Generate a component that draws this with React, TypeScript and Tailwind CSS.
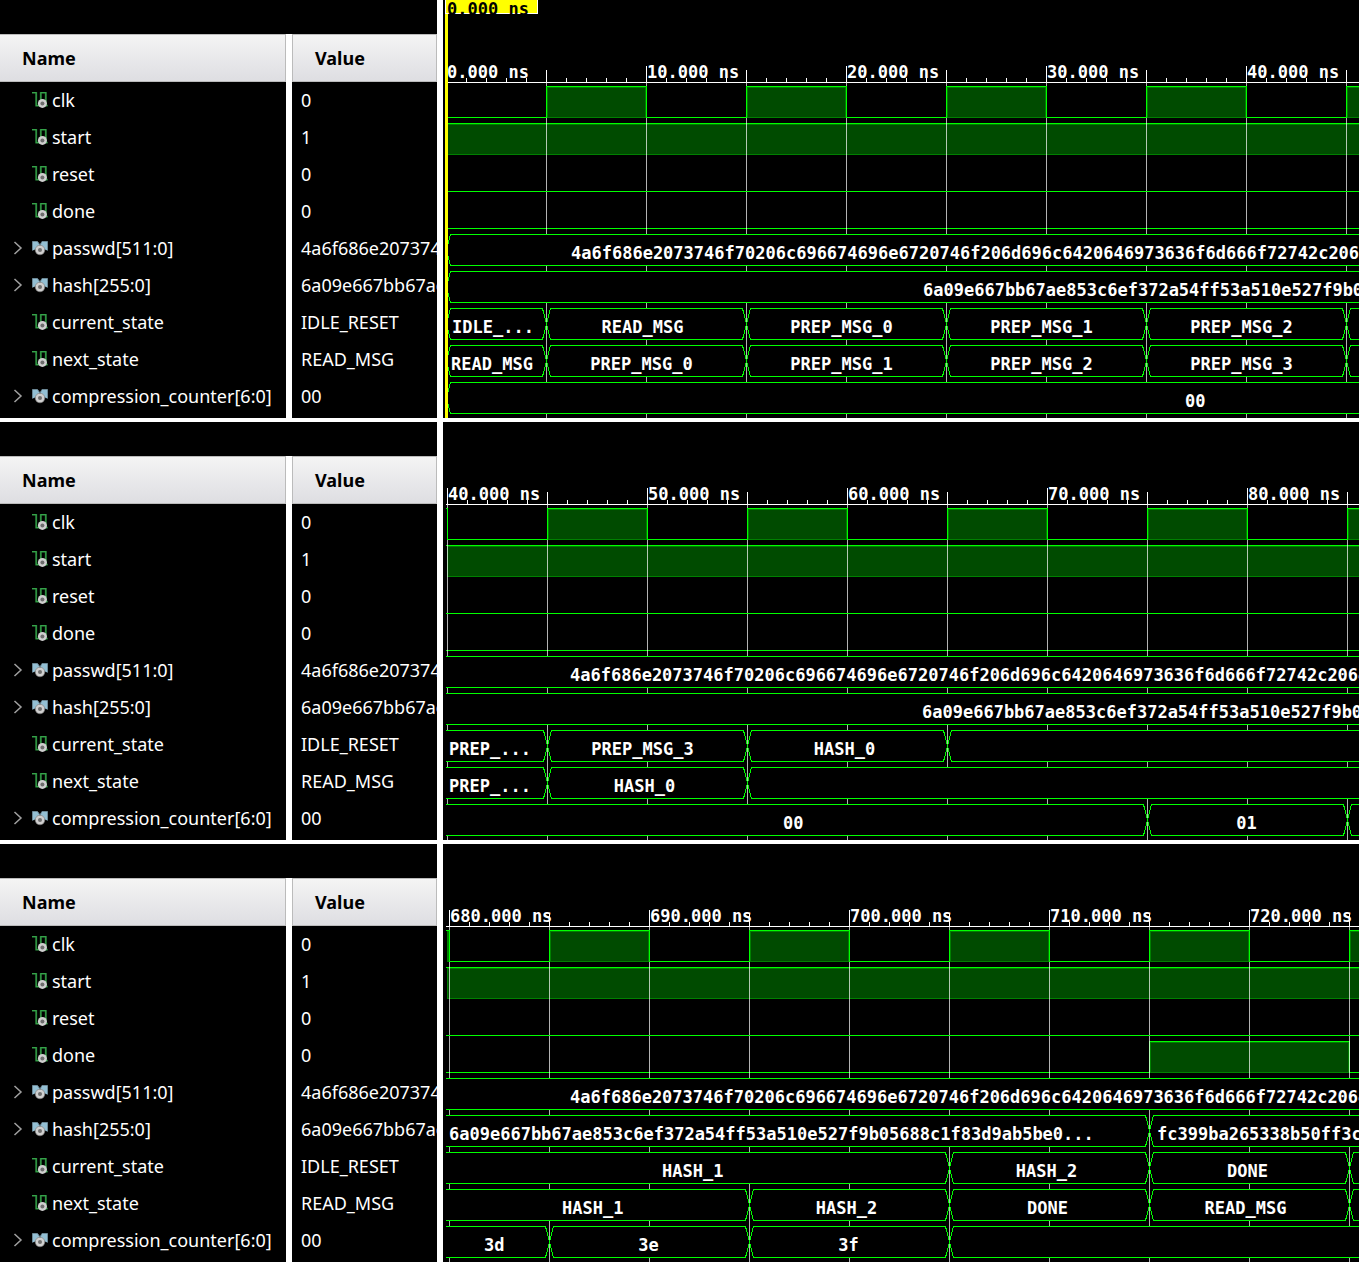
import React from "react";

type Segment = { end?: number; label?: string; at?: number };
type Pulse = [number, number];

type Panel = {
  id: string;
  origin: number;
  firstLabel: number;
  cursor?: boolean;
  clk: Pulse[];
  start: Pulse[];
  done: Pulse[];
  buses: Segment[][];
};

const FAR = 4000;
const PASSWD = "4a6f686e2073746f70206c696674696e6720746f206d696c6420646973636f6d666f72742c20646";
const HASH = "6a09e667bb67ae853c6ef372a54ff53a510e527f9b05688c1f83d9ab5be0";

const clock = (first: number): Pulse[] =>
  Array.from({ length: 18 }, (_, i) => [first + i * 200, first + i * 200 + 100]);

// x values are measured from the left edge of the waveform column; 20 px per nanosecond.
const panels: Panel[] = [
  {
    id: "w0",
    origin: 3,
    firstLabel: 0,
    cursor: true,
    clk: clock(103),
    start: [[3, FAR]],
    done: [],
    buses: [
      [{ end: 3 }, { label: PASSWD, at: 128 }],
      [{ end: 3 }, { label: HASH.slice(0, 46), at: 480 }],
      [
        { end: 3 },
        { end: 103, label: "IDLE_...", at: 9 },
        { end: 303, label: "READ_MSG" },
        { end: 503, label: "PREP_MSG_0" },
        { end: 703, label: "PREP_MSG_1" },
        { end: 903, label: "PREP_MSG_2" },
        {},
      ],
      [
        { end: 3 },
        { end: 103, label: "READ_MSG", at: 8 },
        { end: 303, label: "PREP_MSG_0" },
        { end: 503, label: "PREP_MSG_1" },
        { end: 703, label: "PREP_MSG_2" },
        { end: 903, label: "PREP_MSG_3" },
        {},
      ],
      [{ end: 3 }, { label: "00", at: 742 }],
    ],
  },
  {
    id: "w1",
    origin: 4,
    firstLabel: 40,
    clk: [[3, 4], ...clock(104)],
    start: [[3, FAR]],
    done: [],
    buses: [
      [{ label: PASSWD, at: 127 }],
      [{ label: HASH.slice(0, 46), at: 479 }],
      [
        { end: 104, label: "PREP_...", at: 6 },
        { end: 304, label: "PREP_MSG_3" },
        { end: 504, label: "HASH_0" },
        {},
      ],
      [{ end: 104, label: "PREP_...", at: 6 }, { end: 304, label: "HASH_0" }, {}],
      [{ end: 704, label: "00", at: 340 }, { end: 904, label: "01" }, {}],
    ],
  },
  {
    id: "w2",
    origin: 6,
    firstLabel: 680,
    clk: [[3, 6], ...clock(106)],
    start: [[3, FAR]],
    done: [[706, 906]],
    buses: [
      [{ label: PASSWD, at: 127 }],
      [
        { end: 706, label: HASH + "...", at: 6 },
        { label: "fc399ba265338b50ff3ca", at: 714 },
      ],
      [
        { end: 506, label: "HASH_1", at: 219 },
        { end: 706, label: "HASH_2" },
        { end: 906, label: "DONE" },
        {},
      ],
      [
        { end: 306, label: "HASH_1", at: 119 },
        { end: 506, label: "HASH_2" },
        { end: 706, label: "DONE" },
        { end: 906, label: "READ_MSG" },
        {},
      ],
      [
        { end: 106, label: "3d", at: 41 },
        { end: 306, label: "3e" },
        { end: 506, label: "3f" },
        {},
      ],
    ],
  },
];

const signals = [
  { name: "clk", value: "0" },
  { name: "start", value: "1" },
  { name: "reset", value: "0" },
  { name: "done", value: "0" },
  { name: "passwd[511:0]", value: "4a6f686e207374", bus: true },
  { name: "hash[255:0]", value: "6a09e667bb67ae", bus: true },
  { name: "current_state", value: "IDLE_RESET" },
  { name: "next_state", value: "READ_MSG" },
  { name: "compression_counter[6:0]", value: "00", bus: true },
];

const LEFT = 3;
const rowTop = (i: number) => 82 + 37 * i;

function SignalIcon() {
  return (
    <svg width="16" height="16" viewBox="0 0 16 16" className="shrink-0" aria-hidden="true">
      <path d="M0 .6H4.2V13.6H8.8V.6H13.8V13.6H15.5" fill="none" stroke="#1d5c28" strokeWidth="2" />
      <path d="M0 .6H4.2V13.6H8.8V.6H13.8V13.6H15.5" fill="none" stroke="#35a349" strokeWidth="1.1" />
      <circle cx="10.4" cy="11.4" r="4.5" fill="#cfcfcf" />
      <circle cx="10.4" cy="11.4" r="2" fill="#6e6e6e" />
    </svg>
  );
}

function BusIcon() {
  return (
    <svg width="16" height="16" viewBox="0 0 16 16" className="shrink-0" aria-hidden="true">
      <path d="M.5 1.5H5.5L8 5L10 1.5H15.5V10.5H.5Z" fill="#93bfd3" stroke="#6c8896" />
      <path d="M0 11L4 9L8 5L12 9L16 11V16H0Z" fill="#000" />
      <circle cx="8" cy="10" r="4.8" fill="#cfcfcf" stroke="#777" strokeWidth=".6" />
      <circle cx="8" cy="10" r="2" fill="#6e6e6e" />
    </svg>
  );
}

function Logic({ row, pulses }: { row: number; pulses: Pulse[] }) {
  const hi = rowTop(row) + 4;
  const lo = hi + 31;
  let d = "";
  let x = LEFT;
  for (const [a, b] of pulses) {
    if (a > LEFT) d += `M${x} ${lo + 0.5}H${a + 0.5}V${hi + 0.5}`;
    else d += `M${LEFT} ${hi + 0.5}`;
    d += `H${b + 0.5}V${lo + 1}`;
    x = b;
  }
  if (x < FAR) d += `M${x} ${lo + 0.5}H${FAR}`;
  return (
    <g>
      {pulses
        .filter(([a, b]) => b - a > 1)
        .map(([a, b]) => (
          <rect
            key={a}
            x={a + 1.5}
            y={hi + 1.5}
            width={b - a - 2}
            height={30}
            fill="#004b00"
            stroke="#008000"
          />
        ))}
      <path d={d} fill="none" stroke="#00ff00" />
    </g>
  );
}

function Bus({ row, segments }: { row: number; segments: Segment[] }) {
  const top = rowTop(row) + 4.5;
  const bottom = top + 31;
  const mid = top + 15.5;
  const parts = segments.map((s, i) => {
    const from = i === 0 ? undefined : segments[i - 1].end;
    const a = from === undefined ? LEFT : from + 0.5;
    const b = s.end === undefined ? FAR : s.end + 0.5;
    const inA = from === undefined ? a : a + 4;
    const inB = s.end === undefined ? b : b - 4;
    const center = (a + b) / 2 - (s.label?.length ?? 0) / 2;
    return { ...s, from, a, b, inA, inB, center, key: i };
  });
  return (
    <g>
      {parts
        .filter((p) => p.b - p.a > 4)
        .map((p) => (
          <g key={p.key}>
            <path
              d={`M${p.a} ${mid}L${p.inA} ${top}H${p.inB}L${p.b} ${mid}L${p.inB} ${bottom}H${p.inA}Z`}
              fill="#000"
            />
            <path
              d={
                `M${p.a} ${p.from === undefined ? top : mid}L${p.inA} ${top}H${p.inB}L${p.b} ${p.end === undefined ? top : mid}` +
                `M${p.a} ${p.from === undefined ? bottom : mid}L${p.inA} ${bottom}H${p.inB}L${p.b} ${p.end === undefined ? bottom : mid}`
              }
              fill="none"
              stroke="#00ff00"
            />
          </g>
        ))}
      {parts
        .filter((p) => p.label)
        .map((p) => (
          <text
            key={p.key}
            x={p.at ?? p.center}
            y={rowTop(row) + 29}
            textAnchor={p.at === undefined ? "middle" : "start"}
            fill="#fff"
          >
            {p.label}
          </text>
        ))}
    </g>
  );
}

function Waveform({ panel }: { panel: Panel }) {
  const ticks = Array.from({ length: 180 }, (_, i) => i);
  return (
    <svg
      width="100%"
      height="418"
      className="block min-w-0 font-['DejaVu_Sans_Mono',monospace] text-[17px] font-bold"
      shapeRendering="crispEdges"
      role="img"
      aria-label={`Waveform from ${panel.firstLabel}.000 ns`}
    >
      {ticks.map((i) => {
        const x = panel.origin + i * 20;
        const y = i % 10 === 0 ? 66 : i % 5 === 0 ? 70 : 78;
        return <rect key={i} x={x} y={y} width="1" height={82 - y} fill="#fff" />;
      })}
      <rect x={LEFT} y="82" width="100%" height="1" fill="#fff" />
      {ticks
        .filter((i) => i % 10 === 0)
        .map((i) => (
          <text key={i} x={panel.origin + i * 20 + 1} y="78" fill="#fff">
            {`${panel.firstLabel + i}.000 ns`}
          </text>
        ))}
      <Logic row={1} pulses={panel.start} />
      <Logic row={3} pulses={panel.done} />
      {ticks
        .filter((i) => i % 5 === 0)
        .map((i) => (
          <rect
            key={i}
            x={panel.origin + i * 20}
            y="83"
            width="1"
            height="335"
            fill="#fff"
            fillOpacity="0.7"
          />
        ))}
      <Logic row={0} pulses={panel.clk} />
      <Logic row={2} pulses={[]} />
      {panel.buses.map((segments, i) => (
        <Bus key={i} row={4 + i} segments={segments} />
      ))}
      {panel.cursor && (
        <g>
          <rect x="2" y="0" width="3" height="418" fill="#ff0" />
          <svg x="2" y="0" width="93" height="14">
            <rect x=".5" y="-1.5" width="92" height="15" fill="#ff0" stroke="#fff" />
            <text x="2" y="15" fill="#000">
              0.000 ns
            </text>
          </svg>
        </g>
      )}
    </svg>
  );
}

function SignalTable() {
  return (
    <table className="w-[437px] shrink-0 table-fixed border-separate border-spacing-0 self-start text-left text-lg leading-6">
      <colgroup>
        <col className="w-[286px]" />
        <col />
      </colgroup>
      <thead>
        <tr>
          <th className="h-12 border-y border-r border-[#bbb] bg-linear-to-b from-[#f4f4f4] to-[#dedee2] p-0 pl-[22px] font-bold text-black">
            Name
          </th>
          <th className="h-12 border-l-6 border-white p-0 font-bold text-black">
            <div className="flex h-12 items-center border border-[#bbb] bg-linear-to-b from-[#f4f4f4] to-[#dedee2] pl-[22px]">
              Value
            </div>
          </th>
        </tr>
      </thead>
      <tbody>
        {signals.map((s) => (
          <tr key={s.name}>
            <td className="h-[37px] p-0 pb-px">
              <div className="flex items-center gap-1 pl-3">
                {s.bus ? (
                  <button type="button" aria-label={`Expand ${s.name}`} className="flex w-4 justify-start">
                    <svg width="12" height="14" viewBox="0 0 12 14" aria-hidden="true">
                      <path d="M2.5 1L9 7L2.5 13" fill="none" stroke="#a0a0a0" strokeWidth="1.5" />
                    </svg>
                  </button>
                ) : (
                  <span className="w-4" />
                )}
                {s.bus ? <BusIcon /> : <SignalIcon />}
                <span className="whitespace-nowrap">{s.name}</span>
              </div>
            </td>
            <td className="h-[37px] overflow-hidden border-l-6 border-white p-0 pb-px pl-[9px] whitespace-nowrap">
              {s.value}
            </td>
          </tr>
        ))}
        <tr aria-hidden="true">
          <td className="h-[3px] p-0" />
          <td className="h-[3px] border-l-6 border-white p-0" />
        </tr>
      </tbody>
    </table>
  );
}

export default function App() {
  return (
    <main className="flex flex-col gap-1 bg-white font-['Noto_Sans',sans-serif] text-white">
      {panels.map((p) => (
        <section key={p.id} className="flex gap-1.5">
          <div className="shrink-0 bg-black pt-[34px]">
            <SignalTable />
          </div>
          <div className="min-w-0 flex-1 overflow-hidden bg-black">
            <Waveform panel={p} />
          </div>
        </section>
      ))}
    </main>
  );
}
